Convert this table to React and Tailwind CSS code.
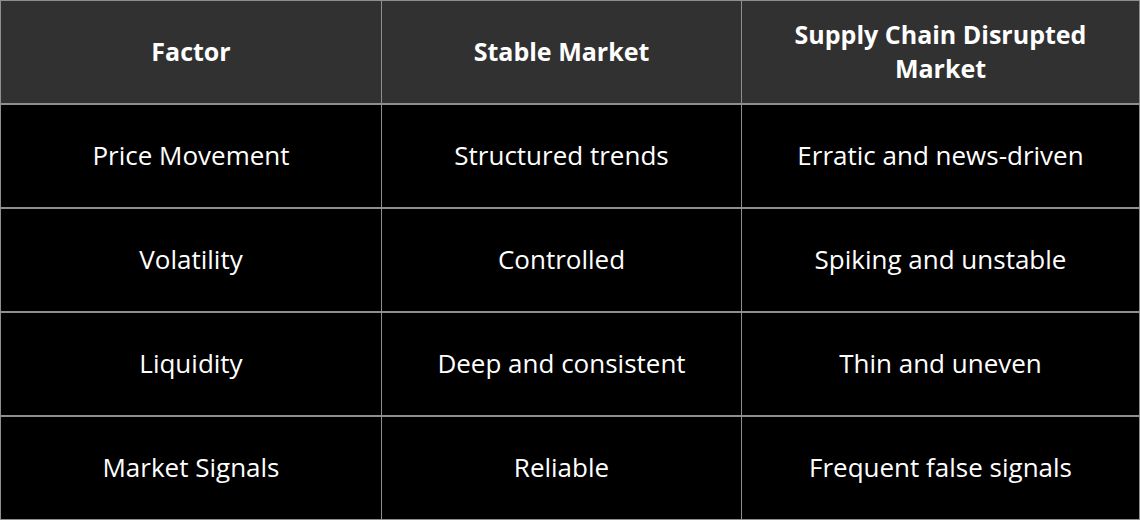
const headers = ['Factor', 'Stable Market', 'Supply Chain Disrupted Market'];

const rows = [
    ['Price Movement', 'Structured trends', 'Erratic and news-driven'],
    ['Volatility', 'Controlled', 'Spiking and unstable'],
    ['Liquidity', 'Deep and consistent', 'Thin and uneven'],
    ['Market Signals', 'Reliable', 'Frequent false signals'],
];

const colWidths = ['w-[381px]', 'w-[360px]', 'w-[398px]'];

function App() {
    return (
        <div
            className="w-[1140px] h-[520px] bg-black text-white border-l border-t border-[#8f8f8f] flex flex-col"
            style={{ fontFamily: '"Open Sans", "Noto Sans", sans-serif' }}
        >
            <div className="flex bg-[#313131]">
                {headers.map((h, i) => (
                    <div
                        key={h}
                        className={`${colWidths[i]} h-[104px] border-r border-b-2 border-[#8f8f8f] flex items-center justify-center text-center px-10 pb-[2px] text-[25px] leading-[34px] font-bold`}
                    >
                        {h}
                    </div>
                ))}
            </div>
            {rows.map((row, r) => (
                <div key={r} className="flex">
                    {row.map((cell, i) => (
                        <div
                            key={i}
                            className={`${colWidths[i]} ${r === rows.length - 1 ? 'h-[103px] border-b' : 'h-[104px] border-b-2'} border-r border-[#8f8f8f] flex items-center justify-center text-center pb-[2px] text-[26px]`}
                        >
                            {cell}
                        </div>
                    ))}
                </div>
            ))}
        </div>
    );
}

export default App;
